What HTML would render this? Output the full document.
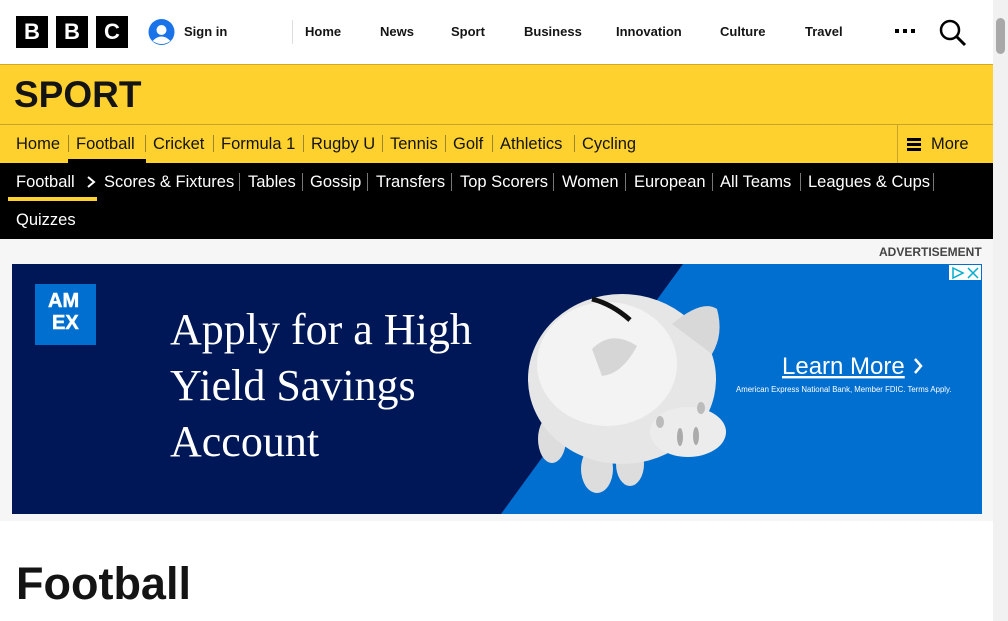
<!DOCTYPE html>
<html><head><style>
*{margin:0;padding:0;box-sizing:border-box}
body{width:1008px;height:621px;overflow:hidden;background:#fff;font-family:"Liberation Sans",sans-serif;position:relative}
.a{position:absolute}
.bbc{top:16px;width:32px;height:32px;background:#000;color:#fff;font-weight:bold;font-size:22px;text-align:center;line-height:32px}
.tn{top:24px;font-size:13px;font-weight:bold;color:#141414}
.yn{top:135px;font-size:16.5px;color:#141414}
.bn{top:173px;font-size:16.5px;color:#fff}
.sep{width:1px;background:#9a8630}
.wsep{width:1px;background:#777}
</style></head><body>
<div class="a bbc" style="left:16px">B</div>
<div class="a bbc" style="left:56px">B</div>
<div class="a bbc" style="left:96px">C</div>
<svg class="a" style="left:148px;top:19px" width="27" height="26" viewBox="0 0 26 26"><circle cx="13" cy="13" r="13" fill="#1a73e8"/><circle cx="13" cy="11" r="5" fill="#fff"/><path d="M4 22 Q13 13 22 22 Q13 28 4 22Z" fill="#fff"/></svg>
<div class="tn a" style="left:184px">Sign in</div>
<div class="a" style="left:292px;top:20px;width:1px;height:24px;background:#ddd"></div>
<div class="tn a" style="left:305px">Home</div>
<div class="tn a" style="left:380px">News</div>
<div class="tn a" style="left:451px">Sport</div>
<div class="tn a" style="left:524px">Business</div>
<div class="tn a" style="left:616px">Innovation</div>
<div class="tn a" style="left:720px">Culture</div>
<div class="tn a" style="left:805px">Travel</div>
<div class="a" style="left:895px;top:29px;width:20px;height:4px;background:repeating-linear-gradient(90deg,#000 0 4px,transparent 4px 8px)"></div>
<svg class="a" style="left:939px;top:19px" width="28" height="28" viewBox="0 0 28 28"><circle cx="11" cy="11" r="9" fill="none" stroke="#000" stroke-width="2.5"/><path d="M17.5 17.5 L26 26" stroke="#000" stroke-width="3"/></svg>
<div class="a" style="left:993px;top:0;width:15px;height:621px;background:#f1f1f1"></div>
<div class="a" style="left:996px;top:18px;width:9px;height:36px;border-radius:5px;background:#a8a8a8"></div>
<div class="a" style="left:0;top:64px;width:993px;height:175px;background:#fed12e;border-top:1px solid #d4a91e"></div>
<div class="a" style="left:14px;top:74px;font-size:37px;font-weight:bold;color:#141414">SPORT</div>
<div class="a" style="left:0;top:124px;width:993px;height:1px;background:#c8a42a"></div>
<div class="yn a" style="left:16px">Home</div><div class="a sep" style="left:68px;top:135px;height:17px"></div>
<div class="yn a" style="left:76px">Football</div><div class="a sep" style="left:145px;top:135px;height:17px"></div>
<div class="a" style="left:68px;top:159px;width:78px;height:4px;background:#000"></div>
<div class="yn a" style="left:153px">Cricket</div><div class="a sep" style="left:213px;top:135px;height:17px"></div>
<div class="yn a" style="left:221px">Formula 1</div><div class="a sep" style="left:303px;top:135px;height:17px"></div>
<div class="yn a" style="left:311px">Rugby U</div><div class="a sep" style="left:382px;top:135px;height:17px"></div>
<div class="yn a" style="left:390px">Tennis</div><div class="a sep" style="left:445px;top:135px;height:17px"></div>
<div class="yn a" style="left:453px">Golf</div><div class="a sep" style="left:492px;top:135px;height:17px"></div>
<div class="yn a" style="left:500px">Athletics</div><div class="a sep" style="left:574px;top:135px;height:17px"></div>
<div class="yn a" style="left:582px">Cycling</div>
<div class="a" style="left:897px;top:125px;width:1px;height:38px;background:#c8a42a"></div>
<div class="a" style="left:907px;top:138px;width:14px;height:13px;background:repeating-linear-gradient(180deg,#000 0 3px,transparent 3px 5px)"></div>
<div class="yn a" style="left:931px">More</div>
<div class="a" style="left:0;top:163px;width:993px;height:76px;background:#000"></div>
<div class="bn a" style="left:16px">Football</div>
<div class="a" style="left:8px;top:197px;width:89px;height:4px;background:#fed12e"></div>
<svg class="a" style="left:85px;top:175px" width="12" height="14"><path d="M3 2 L9 7 L3 12" fill="none" stroke="#fff" stroke-width="2"/></svg>
<div class="bn a" style="left:104px">Scores &amp; Fixtures</div><div class="a wsep" style="left:239px;top:173px;height:18px"></div>
<div class="bn a" style="left:248px">Tables</div><div class="a wsep" style="left:302px;top:173px;height:18px"></div>
<div class="bn a" style="left:310px">Gossip</div><div class="a wsep" style="left:367px;top:173px;height:18px"></div>
<div class="bn a" style="left:376px">Transfers</div><div class="a wsep" style="left:451px;top:173px;height:18px"></div>
<div class="bn a" style="left:460px">Top Scorers</div><div class="a wsep" style="left:553px;top:173px;height:18px"></div>
<div class="bn a" style="left:562px">Women</div><div class="a wsep" style="left:625px;top:173px;height:18px"></div>
<div class="bn a" style="left:634px">European</div><div class="a wsep" style="left:712px;top:173px;height:18px"></div>
<div class="bn a" style="left:720px">All Teams</div><div class="a wsep" style="left:800px;top:173px;height:18px"></div>
<div class="bn a" style="left:808px">Leagues &amp; Cups</div><div class="a wsep" style="left:933px;top:173px;height:18px"></div>
<div class="bn a" style="left:16px;top:211px">Quizzes</div>
<div class="a" style="left:0;top:239px;width:993px;height:282px;background:#f6f6f6"></div>
<div class="a" style="left:879px;top:245px;font-size:12px;font-weight:bold;color:#444">ADVERTISEMENT</div>
<svg class="a" style="left:12px;top:264px" width="970" height="250" viewBox="0 0 970 250">
<rect width="970" height="250" fill="#001757"/>
<polygon points="671,0 970,0 970,250 489,250" fill="#006fcf"/>
<rect x="23" y="20" width="61" height="61" fill="#006fcf"/>
<text x="36" y="43" font-family="Liberation Sans" font-weight="bold" font-size="20" fill="#fff" stroke="#fff" stroke-width="0.5">AM</text>
<text x="40" y="65" font-family="Liberation Sans" font-weight="bold" font-size="20" fill="#fff" stroke="#fff" stroke-width="0.5">EX</text>
<text x="158" y="80" font-family="Liberation Serif" font-size="44" fill="#fff">Apply for a High</text>
<text x="158" y="136" font-family="Liberation Serif" font-size="44" fill="#fff">Yield Savings</text>
<text x="158" y="192" font-family="Liberation Serif" font-size="44" fill="#fff">Account</text>
<ellipse cx="585" cy="205" rx="16" ry="24" fill="#ddd"/>
<ellipse cx="540" cy="175" rx="14" ry="24" fill="#ddd"/>
<ellipse cx="618" cy="200" rx="14" ry="22" fill="#ddd"/>
<ellipse cx="610" cy="115" rx="94" ry="85" fill="#e6e6e6"/>
<ellipse cx="595" cy="100" rx="70" ry="62" fill="#f3f3f3"/>
<path d="M580 35 Q600 40 618 56" stroke="#111" stroke-width="5" fill="none"/>
<path d="M660 60 Q690 35 705 45 Q712 70 700 90Z" fill="#d8d8d8"/>
<path d="M580 85 Q600 65 625 82 Q610 110 590 112Z" fill="#d6d6d6"/>
<ellipse cx="676" cy="168" rx="38" ry="25" fill="#ececec"/>
<ellipse cx="668" cy="173" rx="3" ry="9" fill="#aaa"/><ellipse cx="684" cy="172" rx="3" ry="9" fill="#aaa"/>
<ellipse cx="689" cy="144" rx="4" ry="6" fill="#bbb"/><ellipse cx="648" cy="158" rx="4" ry="6" fill="#bbb"/>
<text x="770" y="110" font-family="Liberation Sans" font-size="24" fill="#fff" text-decoration="underline">Learn More</text>
<path d="M903 95 L909 102 L903 109" fill="none" stroke="#fff" stroke-width="2.5"/>
<text x="724" y="128" font-family="Liberation Sans" font-size="7.8" fill="#fff">American Express National Bank, Member FDIC. Terms Apply.</text>
<rect x="937" y="1" width="32" height="15" fill="#fff"/>
<path d="M941 4 L951 9 L941 14Z" fill="none" stroke="#00aecd" stroke-width="1.5"/>
<path d="M956 4 L966 14 M966 4 L956 14" stroke="#00aecd" stroke-width="1.5"/>
</svg>
<div class="a" style="left:16px;top:558px;font-size:45px;font-weight:bold;color:#141414">Football</div>
</body></html>
